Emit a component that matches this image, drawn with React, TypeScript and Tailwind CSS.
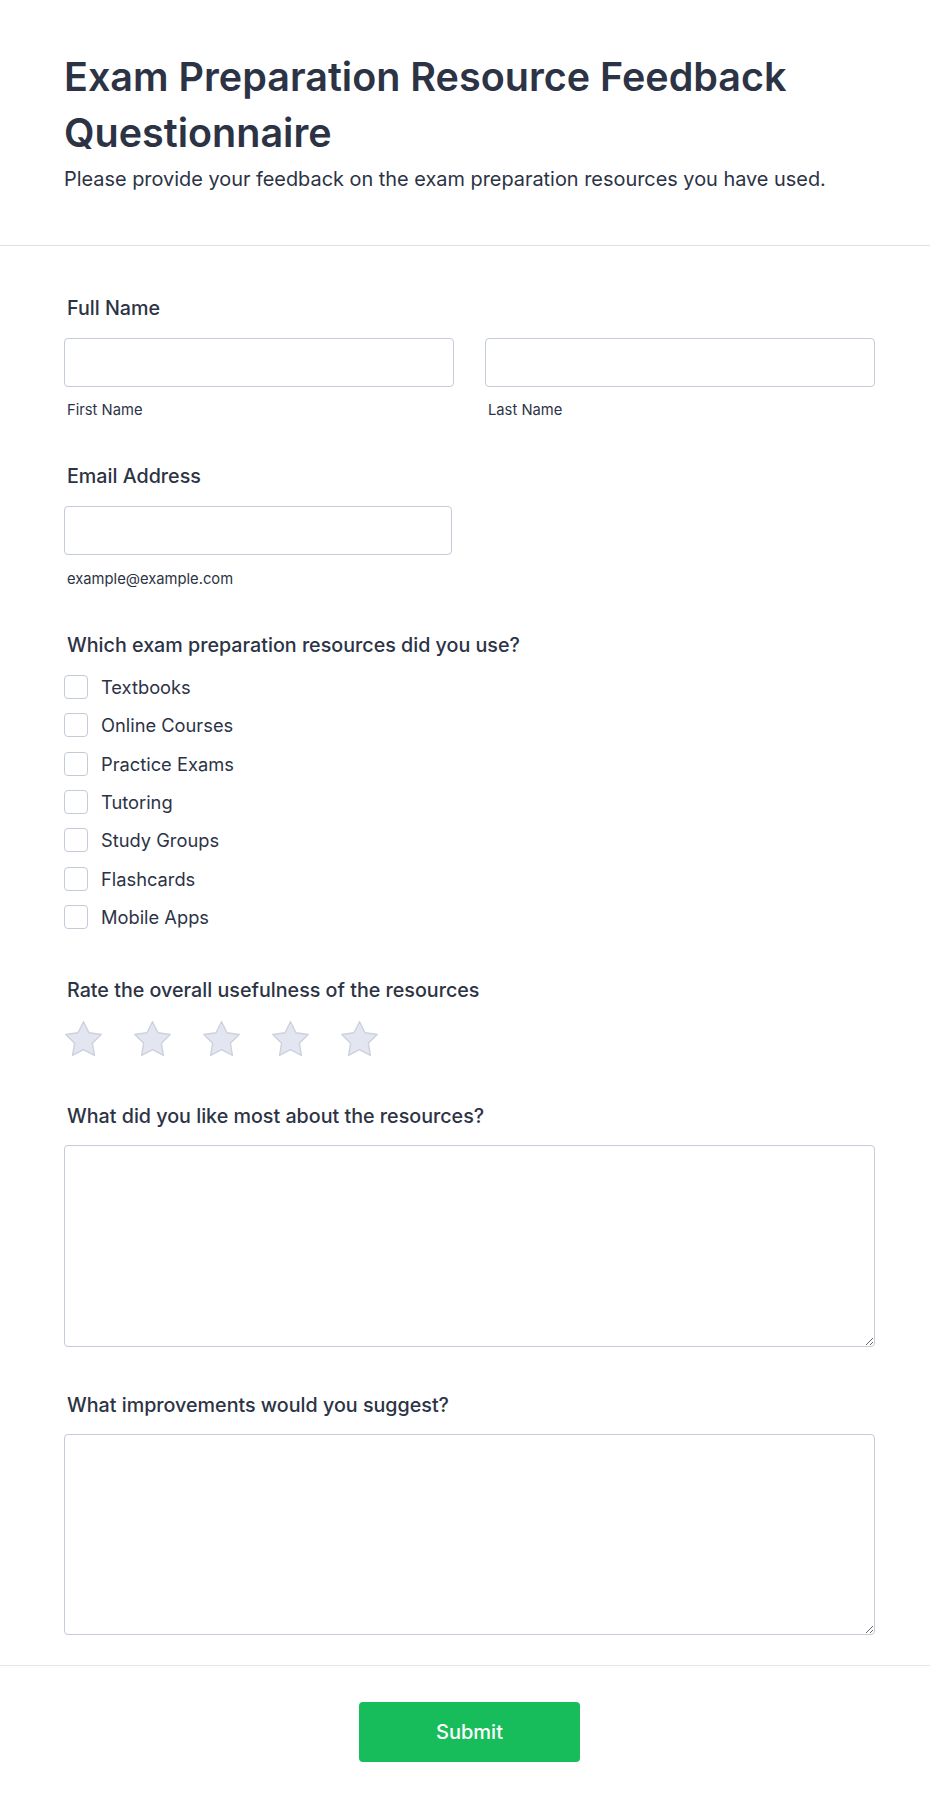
import React from "react";

const options = [
  "Textbooks",
  "Online Courses",
  "Practice Exams",
  "Tutoring",
  "Study Groups",
  "Flashcards",
  "Mobile Apps",
];

function Star() {
  return (
    <svg width="37" height="35" viewBox="1.6 1.6 20.8 19.8" className="block">
      <path
        d="M12 2l3.09 6.26L22 9.27l-5 4.87 1.18 6.88L12 17.77l-6.18 3.25L7 14.14 2 9.27l6.91-1.01L12 2z"
        fill="#e3e6f0"
        stroke="#cdd1de"
        strokeWidth="0.8"
        strokeLinejoin="round"
      />
    </svg>
  );
}

export default function App() {
  return (
    <div
      className="w-[930px] min-h-[1812px] bg-white text-[#2c3345]"
      style={{ fontFamily: "Inter, 'Noto Sans', sans-serif" }}
    >
      {/* Header */}
      <div className="pl-[64px] pr-[55px] pt-[49px] pb-[52px] border-b border-[#dfe0e8]">
        <h1 className="text-[39.5px] leading-[56px] font-semibold">
          Exam Preparation Resource Feedback Questionnaire
        </h1>
        <p className="mt-[4px] text-[19.9px] leading-[28px]">
          Please provide your feedback on the exam preparation resources you have used.
        </p>
      </div>

      {/* Body */}
      <div className="pl-[64px] pr-[55px] pt-[48px] pb-[30px]">
        {/* Full Name */}
        <div className="text-[19.7px] leading-[28px] font-medium pl-[3px]">Full Name</div>
        <div className="mt-[16px] grid grid-cols-2 gap-[31px]">
          <div>
            <input className="block w-full h-[49px] border border-[#c3cad8] rounded-[4px] bg-white" />
            <div className="mt-[13px] text-[14.75px] leading-[20px] pl-[3px]">First Name</div>
          </div>
          <div>
            <input className="block w-full h-[49px] border border-[#c3cad8] rounded-[4px] bg-white" />
            <div className="mt-[13px] text-[14.75px] leading-[20px] pl-[3px]">Last Name</div>
          </div>
        </div>

        {/* Email */}
        <div className="mt-[42px] text-[19.7px] leading-[28px] font-medium pl-[3px]">Email Address</div>
        <input className="mt-[16px] block w-[388px] h-[49px] border border-[#c3cad8] rounded-[4px] bg-white" />
        <div className="mt-[14px] text-[14.75px] leading-[20px] pl-[3px]">example@example.com</div>

        {/* Checkboxes */}
        <div className="mt-[42px] text-[19.7px] leading-[28px] font-medium pl-[3px]">
          Which exam preparation resources did you use?
        </div>
        <div className="mt-[16px] flex flex-col gap-[14.33px]">
          {options.map((o) => (
            <label key={o} className="flex items-center h-[24px] gap-[13px]">
              <span className="w-[24px] h-[24px] border border-[#c3cad8] rounded-[4px] bg-white shrink-0" />
              <span className="text-[18.3px] leading-[24px]">{o}</span>
            </label>
          ))}
        </div>

        {/* Rating */}
        <div className="mt-[47px] text-[19.7px] leading-[28px] font-medium pl-[3px]">
          Rate the overall usefulness of the resources
        </div>
        <div className="mt-[17px] ml-[1px] flex gap-[32px]">
          <Star />
          <Star />
          <Star />
          <Star />
          <Star />
        </div>

        {/* Liked most */}
        <div className="mt-[46px] text-[19.7px] leading-[28px] font-medium pl-[3px]">
          What did you like most about the resources?
        </div>
        <textarea className="mt-[15px] block w-full h-[202px] border border-[#c3cad8] rounded-[4px] bg-white" />

        {/* Improvements */}
        <div className="mt-[44px] text-[19.7px] leading-[28px] font-medium pl-[3px]">
          What improvements would you suggest?
        </div>
        <textarea className="mt-[15px] block w-full h-[201px] border border-[#c3cad8] rounded-[4px] bg-white" />
      </div>

      {/* Footer */}
      <div className="border-t border-[#e6e7ee] pl-[64px] pr-[55px] pt-[36px] pb-[50px] flex justify-center">
        <button className="w-[221px] h-[60px] rounded-[4px] bg-[#18bd5b] text-white text-[20px] font-medium">
          Submit
        </button>
      </div>
    </div>
  );
}
